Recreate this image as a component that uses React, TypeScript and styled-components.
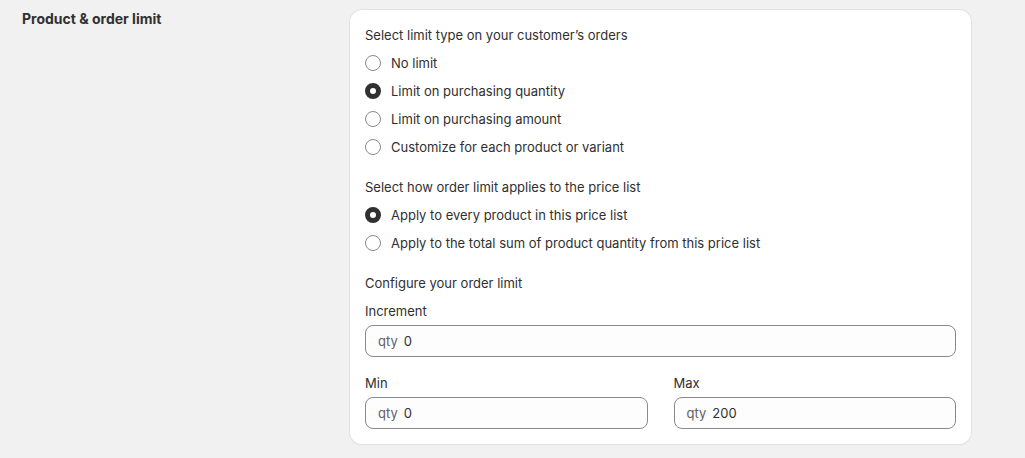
import styled, { createGlobalStyle } from "styled-components";

const GlobalStyle = createGlobalStyle`
  html, body {
    margin: 0;
    padding: 0;
    background: #f1f1f1;
  }
  body {
    font-family: Inter, "Noto Sans", sans-serif;
    font-size: 13px;
    color: #303030;
    -webkit-font-smoothing: antialiased;
  }
`;

const Page = styled.div`
  display: flex;
  align-items: flex-start;
  padding: 10px 54px 14px 22px;
  min-height: 458px;
  box-sizing: border-box;
`;

const Aside = styled.div`
  width: 328px;
  flex-shrink: 0;
`;

const Heading = styled.h2`
  margin: 0;
  font-size: 14px;
  line-height: 17px;
  font-weight: 650;
  color: #303030;
`;

const Card = styled.div`
  width: 621px;
  box-sizing: border-box;
  background: #ffffff;
  border-radius: 12px;
  padding: 15px 15px;
  box-shadow: 0 0 0 1px #e3e3e3, 0 1px 1px rgba(0, 0, 0, 0.1);
  display: flex;
  flex-direction: column;
  gap: 20px;
`;

const Section = styled.div`
  display: flex;
  flex-direction: column;
  gap: 8px;
`;

const Text = styled.div`
  line-height: 20px;
`;

const RadioRow = styled.label`
  display: flex;
  align-items: center;
  gap: 10px;
  line-height: 20px;
  cursor: pointer;
`;

const RadioDot = styled.span<{ $checked?: boolean }>`
  width: 16px;
  height: 16px;
  box-sizing: border-box;
  border-radius: 50%;
  background: #ffffff;
  border: ${(p) => (p.$checked ? "5px solid #303030" : "1px solid #8a8a8a")};
  flex-shrink: 0;
`;

const Field = styled.div`
  display: flex;
  flex-direction: column;
  gap: 4px;
`;

const Row = styled.div`
  display: grid;
  grid-template-columns: 1fr 1fr;
  column-gap: 26px;
  margin-top: 8px;
`;

const InputBox = styled.div`
  display: flex;
  align-items: center;
  gap: 6px;
  height: 32px;
  box-sizing: border-box;
  padding: 0 12px;
  border: 1px solid #8a8a8a;
  border-radius: 8px;
  background: #fdfdfd;
`;

const Prefix = styled.span`
  color: #616161;
`;

const Value = styled.span`
  color: #303030;
`;

function Radio({ label, checked }: { label: string; checked?: boolean }) {
  return (
    <RadioRow>
      <RadioDot $checked={checked} />
      {label}
    </RadioRow>
  );
}

function QtyField({ label, value }: { label: string; value: string }) {
  return (
    <Field>
      <Text>{label}</Text>
      <InputBox>
        <Prefix>qty</Prefix>
        <Value>{value}</Value>
      </InputBox>
    </Field>
  );
}

export default function App() {
  return (
    <>
      <GlobalStyle />
      <Page>
        <Aside>
          <Heading>Product &amp; order limit</Heading>
        </Aside>
        <Card>
          <Section>
            <Text>Select limit type on your customer’s orders</Text>
            <Radio label="No limit" />
            <Radio label="Limit on purchasing quantity" checked />
            <Radio label="Limit on purchasing amount" />
            <Radio label="Customize for each product or variant" />
          </Section>
          <Section>
            <Text>Select how order limit applies to the price list</Text>
            <Radio label="Apply to every product in this price list" checked />
            <Radio label="Apply to the total sum of product quantity from this price list" />
          </Section>
          <Section>
            <Text>Configure your order limit</Text>
            <QtyField label="Increment" value="0" />
            <Row>
              <QtyField label="Min" value="0" />
              <QtyField label="Max" value="200" />
            </Row>
          </Section>
        </Card>
      </Page>
    </>
  );
}
